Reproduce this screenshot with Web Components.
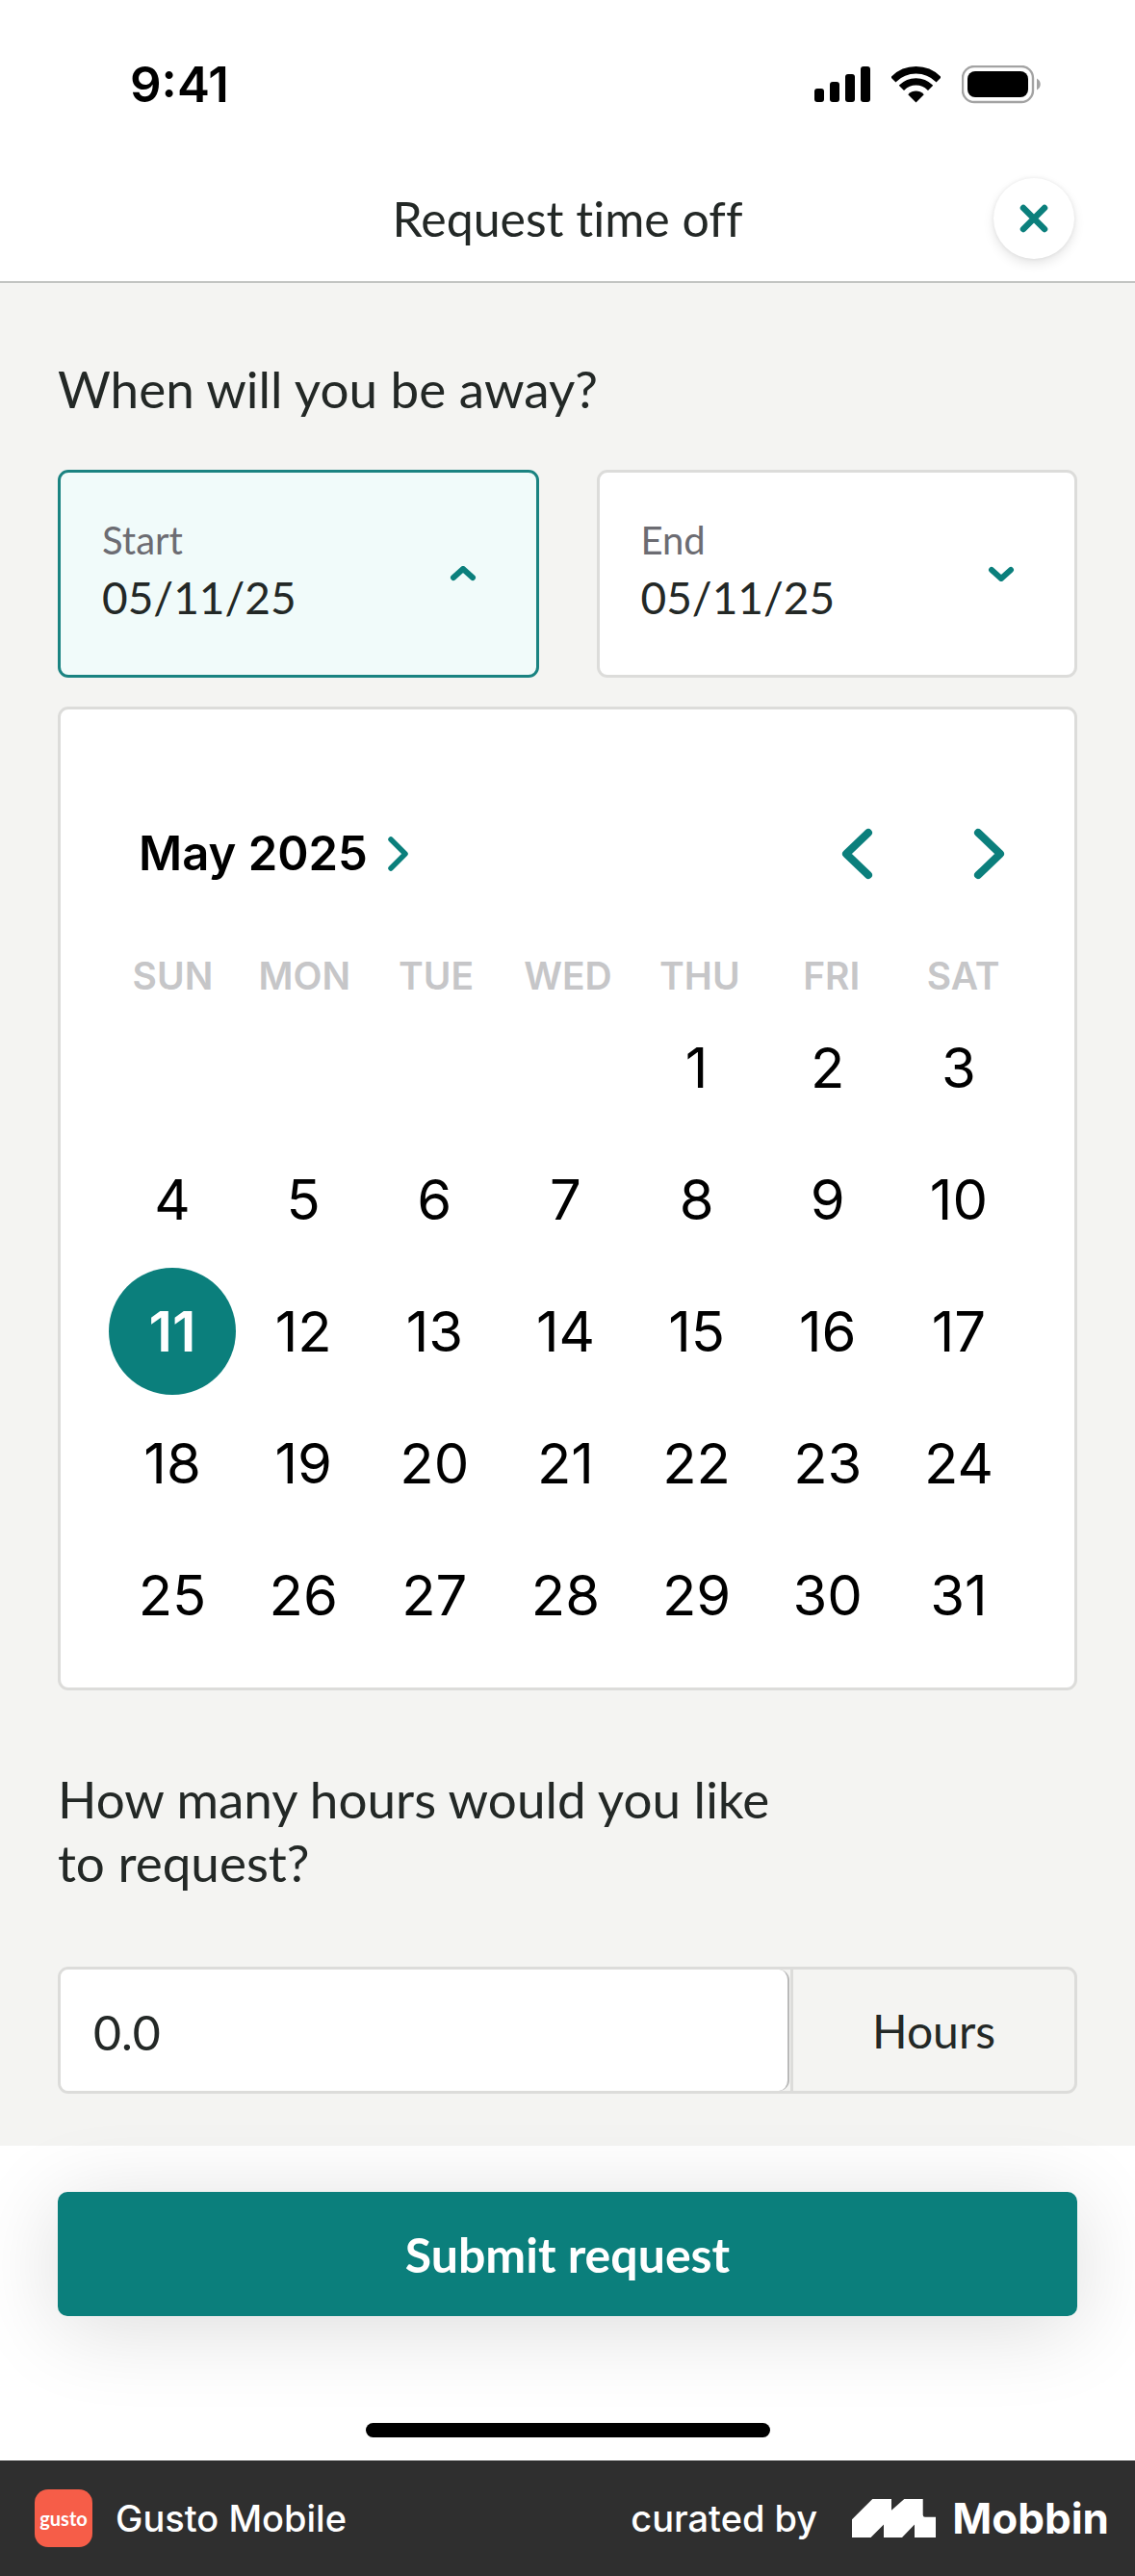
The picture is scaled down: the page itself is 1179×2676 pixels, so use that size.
<!DOCTYPE html>
<html lang="en">
<head>
<meta charset="utf-8">
<meta name="viewport" content="width=device-width, initial-scale=1">
<title>Request time off</title>
<style>
  :root {
    --teal: #0b7f7c;
    --ink: #232826;
    --line: #dcdcda;
    --canvas: #f4f4f2;
    --brand: Lato, "Open Sans", sans-serif;
    --system: Inter, "Liberation Sans", sans-serif;
  }
  body { margin: 0; background: #fff; color: var(--ink); font-family: var(--brand); font-variant-ligatures: none; }
</style>
</head>
<body>
<time-off-page></time-off-page>

<script>
const define = (name, html, setup) => {
  const tpl = document.createElement('template');
  tpl.innerHTML = `<style>*{box-sizing:border-box}button,input{font:inherit;font-variant-ligatures:none;color:inherit;margin:0;padding:0;border:0;background:none}svg{display:block;flex:none}</style>` + html;
  customElements.define(name, class extends HTMLElement {
    constructor() {
      super();
      this.attachShadow({ mode: 'open' }).append(tpl.content.cloneNode(true));
    }
    connectedCallback() { if (setup) setup(this, this.shadowRoot); }
  });
};

define('status-bar', `
<style>
  :host { display: flex; justify-content: space-between; align-items: center; padding: 58px 97px 24px 135px; font: 600 51px/60px var(--system); color: #000; }
  .icons { display: flex; align-items: center; gap: 22px; }
</style>
<span>9:41</span>
<div class="icons">
  <svg width="58" height="38" viewBox="0 0 58 38" role="img" aria-label="Signal">
    <rect x="0" y="23" width="10" height="14" rx="3"/><rect x="16" y="16" width="10" height="21" rx="3"/>
    <rect x="32" y="8" width="10" height="29" rx="3"/><rect x="48" y="0" width="10" height="37" rx="3"/>
  </svg>
  <svg width="51" height="38" viewBox="0 0 51 38" role="img" aria-label="Wi-Fi">
    <clipPath id="w"><path d="M25.5 37.5-12.5-.5h76z"/></clipPath>
    <g clip-path="url(#w)"><g fill="none" stroke="#000" stroke-width="7.4"><circle cx="25.5" cy="36.5" r="32.8"/><circle cx="25.5" cy="36.5" r="20.6"/></g><circle cx="25.5" cy="36.5" r="11"/></g>
  </svg>
  <svg width="83" height="40" viewBox="0 0 83 40" role="img" aria-label="Battery">
    <rect x="1" y="1" width="73" height="37" rx="12" fill="none" stroke="#a3a3a3" stroke-width="2.4"/>
    <rect x="6" y="6" width="63" height="27" rx="8"/><path d="M78 13.500c5 2.500 5 9.500 0 12z" fill="#a3a3a3"/>
  </svg>
</div>`);

define('app-header', `
<style>
  :host { display: grid; grid-template-columns: 1fr auto 1fr; align-items: center; padding: 43px 63px 23px; border-bottom: 2px solid #c2c4c2; }
  h1 { grid-column: 2; margin: 0; font-size: 50px; font-weight: 400; line-height: 66px; }
  button { justify-self: end; width: 84px; height: 84px; border-radius: 50%; background: #fff; display: grid; place-items: center; box-shadow: 0 0 4px rgba(0,0,0,.08), 0 5px 12px rgba(0,0,0,.1); }
</style>
<h1><slot></slot></h1>
<button type="button" aria-label="Close">
  <svg width="30" height="30" viewBox="0 0 30 30"><path d="M4 4l22 22M26 4 4 26" stroke="var(--teal)" stroke-width="6.500" stroke-linecap="round"/></svg>
</button>`);

define('date-field', `
<style>
  :host { display: block; flex: 1; }
  button { width: 100%; display: flex; justify-content: space-between; align-items: center; text-align: left; padding: 43px 62px 47px 43px; border: 3px solid var(--line); border-radius: 11px; background: #fff; }
  :host([open]) button { border-color: #1a8381; background: #f1fbfa; }
  .text { display: flex; flex-direction: column; }
  .name { font-size: 40px; line-height: 54px; color: #6c6c72; }
  .date { font-size: 46px; line-height: 66px; }
  svg { margin-top: 4px; }
  :host([open]) path { transform: rotate(180deg); transform-origin: 14px 8px; }
</style>
<button type="button">
  <span class="text"><span class="name"></span><span class="date"><slot></slot></span></span>
  <svg width="28" height="16" viewBox="0 0 28 16"><path d="M4 4l10 9L24 4" fill="none" stroke="var(--teal)" stroke-width="6" stroke-linecap="round" stroke-linejoin="round"/></svg>
</button>`, (el, root) => {
  root.querySelector('.name').textContent = el.getAttribute('label');
  root.querySelector('button').setAttribute('aria-expanded', el.hasAttribute('open'));
});

define('month-calendar', `
<style>
  :host { display: block; padding: 120px 47px 28px 48px; border: 3px solid var(--line); border-radius: 11px; background: #fff; color: #000; font-family: var(--system); }
  header { display: flex; justify-content: space-between; align-items: center; padding: 0 24px 0 33px; margin-bottom: 73px; }
  .month { display: flex; align-items: center; gap: 20px; font-size: 49px; font-weight: 600; line-height: 60px; }
  nav { display: flex; gap: 104px; }
  path { fill: none; stroke: var(--teal); stroke-linecap: round; stroke-linejoin: round; }
  table, thead { display: block; }
  tbody { display: block; padding: 2px 5px 0 0; }
  tr { display: grid; grid-template-columns: repeat(7, 1fr); }
  th { padding: 0; font-size: 39px; line-height: 48px; font-weight: 600; color: #c6c6c8; }
  td { padding: 0; height: 137px; display: grid; place-items: center; }
  td button { width: 132px; height: 132px; border-radius: 50%; font-size: 58px; }
  td button[aria-pressed] { background: var(--teal); color: #fff; font-weight: 600; }
</style>
<header>
  <button type="button" class="month"><span></span>
    <svg width="24" height="38" viewBox="0 0 24 38"><path d="M4 4l15 15L4 34" stroke-width="5.500"/></svg></button>
  <nav>
    <button type="button" aria-label="Previous month"><svg width="34" height="54" viewBox="0 0 34 54"><path d="M29 5 6 27l23 22" stroke-width="8"/></svg></button>
    <button type="button" aria-label="Next month"><svg width="34" height="54" viewBox="0 0 34 54"><path d="M5 5l23 22L5 49" stroke-width="8"/></svg></button>
  </nav>
</header>
<table><thead><tr></tr></thead><tbody></tbody></table>`, (el, root) => {
  const [year, month, day] = el.getAttribute('value').split('-').map(Number);
  const first = new Date(year, month - 1, 1).getDay();
  const count = new Date(year, month, 0).getDate();
  const names = ['January','February','March','April','May','June','July','August','September','October','November','December'];
  root.querySelector('.month span').textContent = `${names[month - 1]} ${year}`;
  root.querySelector('thead tr').innerHTML = ['SUN','MON','TUE','WED','THU','FRI','SAT'].map(d => `<th scope="col">${d}</th>`).join('');
  let rows = '';
  for (let start = 1 - first; start <= count; start += 7) {
    rows += '<tr>';
    for (let d = start; d < start + 7; d++) {
      rows += d < 1 || d > count ? '<td></td>' : `<td><button type="button"${d === day ? ' aria-pressed="true"' : ''}>${d}</button></td>`;
    }
    rows += '</tr>';
  }
  root.querySelector('tbody').innerHTML = rows;
});

define('hours-field', `
<style>
  :host { display: block; }
  label { display: block; max-width: 780px; font-size: 53px; line-height: 66px; margin-bottom: 75px; }
  .box { display: flex; height: 132px; border: 3px solid var(--line); border-radius: 11px; overflow: hidden; }
  input { flex: 1; min-width: 0; padding: 4px 34px 0; font-size: 50px; background: #fff; border-right: 2px solid #b9b9b9; border-radius: 0 11px 11px 0; }
  .unit { width: 295px; margin-left: 1px; border-left: 3px solid var(--line); display: grid; place-items: center; font-size: 48px; }
</style>
<label for="hours"><slot></slot></label>
<div class="box"><input id="hours" type="text" inputmode="decimal" value="0.0"><span class="unit">Hours</span></div>`);

define('submit-bar', `
<style>
  :host { display: block; padding: 48px 60px 24px; position: relative; }
  button { display: block; width: 100%; height: 129px; border-radius: 10px; background: var(--teal); color: #fff; font-size: 50px; font-weight: 700; box-shadow: 0 12px 90px rgba(0,0,0,.14); }
  .home { width: 420px; height: 15px; margin: 111px auto 0; border-radius: 8px; background: #000; }
</style>
<button type="submit"><slot></slot></button>
<div class="home"></div>`);

define('credit-bar', `
<style>
  :host { display: flex; justify-content: space-between; align-items: center; height: 120px; padding: 0 27px 0 36px; background: #2f2f2f; color: #fff; font: 500 38px/48px var(--system); position: relative; }
  div { display: flex; align-items: center; }
  .app { gap: 24px; }
  .logo { width: 60px; height: 60px; border-radius: 14px; background: #f65d48; display: grid; place-items: center; font: 700 20px/24px var(--brand); }
  .by { gap: 36px; }
  .mobbin { gap: 17px; font-size: 44px; font-weight: 700; }
</style>
<div class="app"><span class="logo">gusto</span><span>Gusto Mobile</span></div>
<div class="by"><span>curated by</span>
  <div class="mobbin"><svg width="87" height="40" viewBox="0 0 87 40"><path fill="#fff" d="M0 21.300 21.300 0H41v11.700L54.300 0h19.400v16.500q0 2.200 2.200 2.200H87V40H65V26.500L52 40H33V26.500L19.500 40H0z"/></svg><span>Mobbin</span></div>
</div>`);

define('time-off-page', `
<style>
  :host { display: flex; flex-direction: column; min-height: 100vh; }
  main { flex: 1; background: var(--canvas); padding: 77px 60px 54px; }
  h2 { margin: 0 0 51px; font-size: 53px; line-height: 66px; font-weight: 400; }
  .dates { display: flex; gap: 60px; margin-bottom: 30px; }
  hours-field { margin-top: 80px; }
</style>
<status-bar></status-bar>
<app-header>Request time off</app-header>
<main>
  <h2>When will you be away?</h2>
  <div class="dates">
    <date-field label="Start" open>05/11/25</date-field>
    <date-field label="End">05/11/25</date-field>
  </div>
  <month-calendar value="2025-5-11"></month-calendar>
  <hours-field>How many hours would you like to request?</hours-field>
</main>
<submit-bar>Submit request</submit-bar>
<credit-bar></credit-bar>`);
</script>
</body>
</html>
